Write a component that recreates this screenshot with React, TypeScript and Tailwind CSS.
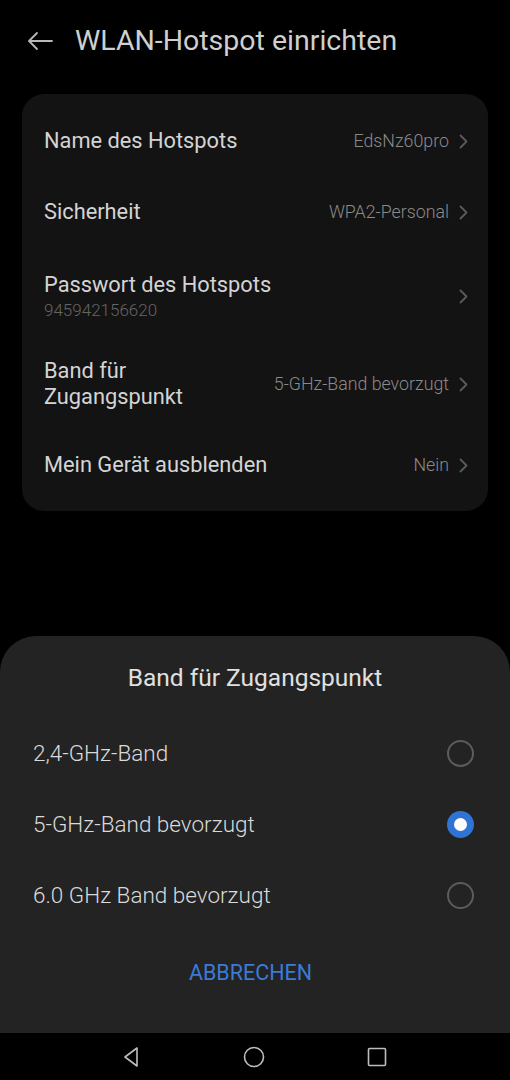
import React from "react"

type TRow = {
  title: string
  subtitle?: string
  value: string
  height: string
}

const ROWS: TRow[] = [
  { title: "Name des Hotspots", value: "EdsNz60pro", height: "h-[70px]" },
  { title: "Sicherheit", value: "WPA2-Personal", height: "h-[72px]" },
  {
    title: "Passwort des Hotspots",
    subtitle: "945942156620",
    value: "",
    height: "h-[96px]",
  },
  {
    title: "Band für\nZugangspunkt",
    value: "5-GHz-Band bevorzugt",
    height: "h-[80px]",
  },
  { title: "Mein Gerät ausblenden", value: "Nein", height: "h-[82px]" },
]

const OPTIONS = ["2,4-GHz-Band", "5-GHz-Band bevorzugt", "6.0 GHz Band bevorzugt"]

const Chevron = () => (
  <svg width="9" height="15" viewBox="0 0 9 15" fill="none">
    <path
      d="M1.5 1.5 L7.5 7.5 L1.5 13.5"
      stroke="#5a5a5a"
      strokeWidth="1.8"
      strokeLinecap="round"
      strokeLinejoin="round"
    />
  </svg>
)

const Radio = ({ checked }: { checked: boolean }) =>
  checked ? (
    <div className="flex h-[27px] w-[27px] items-center justify-center rounded-full bg-[#2f74d2]">
      <div className="h-[13px] w-[13px] rounded-full bg-white" />
    </div>
  ) : (
    <div className="h-[27px] w-[27px] rounded-full border-2 border-[#5c5c5c]" />
  )

export default function App() {
  return (
    <div className="flex h-[1080px] w-[510px] flex-col bg-black font-['Roboto',sans-serif]">
      {/* Header */}
      <div className="flex h-[82px] items-center pl-[27px]">
        <svg width="26" height="20" viewBox="0 0 26 20" fill="none">
          <path
            d="M25 10 H2 M10 2 L2 10 L10 18"
            stroke="#b8b8b8"
            strokeWidth="1.8"
            strokeLinecap="round"
            strokeLinejoin="round"
          />
        </svg>
        <h1 className="ml-[22px] text-[28.5px] leading-none text-[#cfcfcf]">
          WLAN-Hotspot einrichten
        </h1>
      </div>

      {/* Settings card */}
      <div className="mx-[22px] mt-[12px] rounded-[22px] bg-[#131313] pb-[5px] pt-[12px]">
        {ROWS.map((row) => (
          <div
            key={row.title}
            className={`flex items-center justify-between pl-[22px] pr-[20px] ${row.height}`}
          >
            <div className="flex flex-col">
              <span className="whitespace-pre-line text-[21.8px] leading-[26px] text-[#d4d4d4]">
                {row.title}
              </span>
              {row.subtitle && (
                <span className="mt-[1px] text-[17px] font-light leading-[22px] text-[#656565]">
                  {row.subtitle}
                </span>
              )}
            </div>
            <div className="flex items-center gap-[10px]">
              {row.value && (
                <span className="text-[17.8px] font-light text-[#8a8a8a]">
                  {row.value}
                </span>
              )}
              <Chevron />
            </div>
          </div>
        ))}
      </div>

      <div className="flex-1" />

      {/* Bottom sheet */}
      <div className="rounded-t-[36px] bg-[#232323] pb-[18px] pt-[26px]">
        <h2 className="text-center text-[24.5px] leading-[32px] text-[#e0e0e0]">
          Band für Zugangspunkt
        </h2>
        <div className="mt-[24px] flex flex-col">
          {OPTIONS.map((option, i) => (
            <div
              key={option}
              className="flex h-[71px] items-center justify-between pl-[33px] pr-[36px]"
            >
              <span className="text-[22.5px] font-light text-[#dadada]">
                {option}
              </span>
              <Radio checked={i === 1} />
            </div>
          ))}
        </div>
        <div className="flex h-[84px] items-center justify-center pr-[9px]">
          <span className="text-[21.5px] text-[#3a7bd6]">ABBRECHEN</span>
        </div>
      </div>

      {/* Navigation bar */}
      <div className="flex h-[47px] items-center justify-center gap-[102px] bg-black pr-[2px]">
        <svg width="20" height="22" viewBox="0 0 20 22" fill="none">
          <path
            d="M16 2 L4 11 L16 20 Z"
            stroke="#bdbdbd"
            strokeWidth="1.6"
            strokeLinejoin="round"
          />
        </svg>
        <svg width="22" height="22" viewBox="0 0 22 22" fill="none">
          <circle cx="11" cy="11" r="9.5" stroke="#bdbdbd" strokeWidth="1.6" />
        </svg>
        <svg width="20" height="20" viewBox="0 0 20 20" fill="none">
          <rect x="1.5" y="1.5" width="17" height="17" rx="1" stroke="#bdbdbd" strokeWidth="1.6" />
        </svg>
      </div>
    </div>
  )
}
